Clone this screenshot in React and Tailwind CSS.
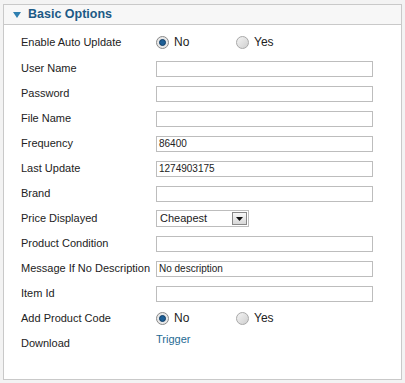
import React from "react";

const font = { fontFamily: '"Liberation Sans", Arial, sans-serif' };

function Radio({ checked }) {
  return checked ? (
    <span className="inline-flex w-[13px] h-[13px] rounded-full border border-[#8a8a8a] bg-[#e8e8e8] items-center justify-center">
      <span className="w-[7px] h-[7px] rounded-full bg-[#1d5f96] border border-[#0f3d66]"></span>
    </span>
  ) : (
    <span className="inline-block w-[13px] h-[13px] rounded-full border border-[#a8a8a8] bg-gradient-to-br from-[#f4f4f4] to-[#cfcfcf]"></span>
  );
}

function RadioPair() {
  return (
    <div className="flex items-center">
      <div className="flex items-center w-[80px]">
        <Radio checked />
        <span className="ml-[5px] text-[12px] text-[#222]">No</span>
      </div>
      <div className="flex items-center">
        <Radio />
        <span className="ml-[5px] text-[12px] text-[#222]">Yes</span>
      </div>
    </div>
  );
}

function Input({ value }) {
  return (
    <div className="w-[217px] h-[16px] border border-[#bdbdbd] bg-white flex items-center px-[2px] text-[10px] text-[#222]">
      {value}
    </div>
  );
}

function Select() {
  return (
    <div className="w-[93px] h-[17px] border border-[#bdbdbd] bg-white flex items-center justify-between pl-[3px] pr-[1px] text-[11px] text-[#222]">
      <span>Cheapest</span>
      <span className="w-[15px] h-[13px] border border-[#888] bg-gradient-to-b from-[#f8f8f8] to-[#d8d8d8] flex items-center justify-center">
        <svg width="7" height="4" viewBox="0 0 7 4"><path d="M0 0h7L3.5 4z" fill="#111" /></svg>
      </span>
    </div>
  );
}

function Row({ label, children, h = "h-[25px]" }) {
  return (
    <div className={`flex items-center ${h}`}>
      <div className="w-[135px] text-[11px] text-[#222] whitespace-nowrap">{label}</div>
      <div className="flex items-center">{children}</div>
    </div>
  );
}

export default function App() {
  return (
    <div className="w-[405px] h-[383px] bg-[#f3f3f3] pt-[4px] pl-[3px]" style={font}>
      <div className="w-[399px] h-[376px] border border-[#c9c9c9] bg-white">
        <div className="h-[20px] bg-[#f7f7f7] border-b border-[#c9c9c9] flex items-center pl-[9px]">
          <svg width="8" height="6" viewBox="0 0 8 6" className="mr-[7px]"><path d="M0 0h8L4 6z" fill="#2f7fb0" /></svg>
          <span className="text-[12.5px] font-bold text-[#1c5a86]">Basic Options</span>
        </div>
        <div className="pl-[17px] pt-[4px]">
          <Row label="Enable Auto Upldate" h="h-[26px]"><RadioPair /></Row>
          <div className="h-[1px]"></div>
          <Row label="User Name"><Input /></Row>
          <Row label="Password"><Input /></Row>
          <Row label="File Name"><Input /></Row>
          <Row label="Frequency"><Input value="86400" /></Row>
          <Row label="Last Update"><Input value="1274903175" /></Row>
          <Row label="Brand"><Input /></Row>
          <Row label="Price Displayed"><Select /></Row>
          <Row label="Product Condition"><Input /></Row>
          <Row label="Message If No Description"><Input value="No description" /></Row>
          <Row label="Item Id"><Input /></Row>
          <Row label="Add Product Code" h="h-[24px]"><RadioPair /></Row>
          <div className="flex h-[26px] items-center">
            <div className="w-[135px] text-[11px] text-[#222]">Download</div>
            <div className="text-[11px] text-[#1f6a93] mb-[8px]">Trigger</div>
          </div>
        </div>
      </div>
    </div>
  );
}
